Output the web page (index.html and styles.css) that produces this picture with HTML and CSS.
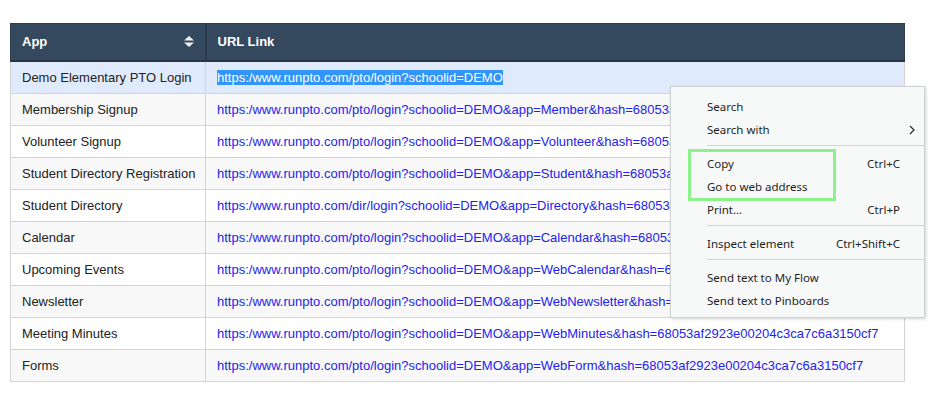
FILE: index.html
```html
<!DOCTYPE html>
<html>
<head>
<meta charset="utf-8">
<link rel="stylesheet" href="styles.css">
</head>
<body>
<div class="page">
  <table class="apps">
    <colgroup><col class="c1"><col class="c2"></colgroup>
    <thead>
      <tr>
        <th><div class="th-inner"><span>App</span>
          <svg class="sort" width="10" height="11" viewBox="0 0 10 11"><path d="M5 0 L10 4.5 H0 Z M0 6.5 H10 L5 11 Z" fill="#eef0f2"/></svg></div></th>
        <th>URL Link</th>
      </tr>
    </thead>
    <tbody>
      <tr class="active"><td>Demo Elementary PTO Login</td><td><a class="sel" href="#">https:/www.runpto.com/pto/login?schoolid=DEMO</a></td></tr>
      <tr><td>Membership Signup</td><td><a href="#">https:/www.runpto.com/pto/login?schoolid=DEMO&amp;app=Member&amp;hash=68053af2923e00204c3ca7c6a3150cf7</a></td></tr>
      <tr><td>Volunteer Signup</td><td><a href="#">https:/www.runpto.com/pto/login?schoolid=DEMO&amp;app=Volunteer&amp;hash=68053af2923e00204c3ca7c6a3150cf7</a></td></tr>
      <tr><td>Student Directory Registration</td><td><a href="#">https:/www.runpto.com/pto/login?schoolid=DEMO&amp;app=Student&amp;hash=68053af2923e00204c3ca7c6a3150cf7</a></td></tr>
      <tr><td>Student Directory</td><td><a href="#">https:/www.runpto.com/dir/login?schoolid=DEMO&amp;app=Directory&amp;hash=68053af2923e00204c3ca7c6a3150cf7</a></td></tr>
      <tr><td>Calendar</td><td><a href="#">https:/www.runpto.com/pto/login?schoolid=DEMO&amp;app=Calendar&amp;hash=68053af2923e00204c3ca7c6a3150cf7</a></td></tr>
      <tr><td>Upcoming Events</td><td><a href="#">https:/www.runpto.com/pto/login?schoolid=DEMO&amp;app=WebCalendar&amp;hash=68053af2923e00204c3ca7c6a3150cf7</a></td></tr>
      <tr><td>Newsletter</td><td><a href="#">https:/www.runpto.com/pto/login?schoolid=DEMO&amp;app=WebNewsletter&amp;hash=68053af2923e00204c3ca7c6a3150cf7</a></td></tr>
      <tr><td>Meeting Minutes</td><td><a href="#">https:/www.runpto.com/pto/login?schoolid=DEMO&amp;app=WebMinutes&amp;hash=68053af2923e00204c3ca7c6a3150cf7</a></td></tr>
      <tr><td>Forms</td><td><a href="#">https:/www.runpto.com/pto/login?schoolid=DEMO&amp;app=WebForm&amp;hash=68053af2923e00204c3ca7c6a3150cf7</a></td></tr>
    </tbody>
  </table>

  <div class="menu">
    <div class="item">Search</div>
    <div class="item"><span>Search with</span><svg class="chev" width="6" height="10" viewBox="0 0 6 10"><path d="M1 1 L5 5 L1 9" fill="none" stroke="#333" stroke-width="1.3"/></svg></div>
    <div class="sep"></div>
    <div class="item"><span>Copy</span><span class="key">Ctrl+C</span></div>
    <div class="item"><span>Go to web address</span></div>
    <div class="item"><span>Print...</span><span class="key">Ctrl+P</span></div>
    <div class="sep"></div>
    <div class="item"><span>Inspect element</span><span class="key">Ctrl+Shift+C</span></div>
    <div class="sep"></div>
    <div class="item">Send text to My Flow</div>
    <div class="item">Send text to Pinboards</div>
  </div>
  <div class="highlight"></div>
</div>
</body>
</html>
```

FILE: styles.css
```css
html, body {
  margin: 0;
  padding: 0;
  background: #fff;
}
.page {
  position: relative;
  width: 940px;
  height: 394px;
  padding: 23px 0 0 10px;
  box-sizing: border-box;
  font-family: "Liberation Sans", Arial, sans-serif;
}
.apps {
  border-collapse: collapse;
  table-layout: fixed;
  width: 894px;
  font-size: 13px;
  color: #222;
}
.c1 { width: 195px; }
.c2 { width: 699px; }
.apps th {
  background: #34495e;
  color: #fff;
  font-weight: bold;
  text-align: left;
  height: 37px;
  padding: 0 11px;
  border-left: 1px solid #2c3e50;
  border-right: 1px solid #2c3e50;
  border-top: 1px solid #2c3e50;
  border-bottom: 2px solid #263645;
  box-sizing: border-box;
}
.apps th:first-child { border-right: 2px solid #2a3a4b; }
.th-inner {
  display: flex;
  align-items: center;
  justify-content: space-between;
}
.apps td {
  height: 31px;
  padding: 0 11px;
  border: 1px solid #d4d4d4;
  white-space: nowrap;
  overflow: hidden;
}
.apps tbody tr:nth-child(even) td { background: #f8f8f8; }
.apps tbody tr.active td { background: #dfeafc; }
.apps a {
  color: #2323ee;
  text-decoration: none;
}
.apps a.sel {
  background: #3294fd;
  color: #fff;
}
.menu {
  position: absolute;
  left: 670px;
  top: 86px;
  width: 255px;
  box-sizing: border-box;
  background: #f7f8f8;
  border: 1px solid #cfd2d4;
  box-shadow: 1px 1px 3px rgba(0,0,0,0.18);
  padding: 8px 0 5px 0;
  font-family: "Noto Sans", "Open Sans", sans-serif;
  font-size: 11.5px;
  color: #1e1e1e;
}
.item {
  height: 23px;
  display: flex;
  align-items: center;
  justify-content: space-between;
  padding: 0 24px 0 36px;
}
.item .chev { margin-right: -15px; }
.sep {
  height: 1px;
  background: #d2d4d6;
  margin: 4px 0 6px 36px;
}
.highlight {
  position: absolute;
  left: 688px;
  top: 149px;
  width: 148px;
  height: 52px;
  box-sizing: border-box;
  border: 3px solid #8df28b;
}
```
